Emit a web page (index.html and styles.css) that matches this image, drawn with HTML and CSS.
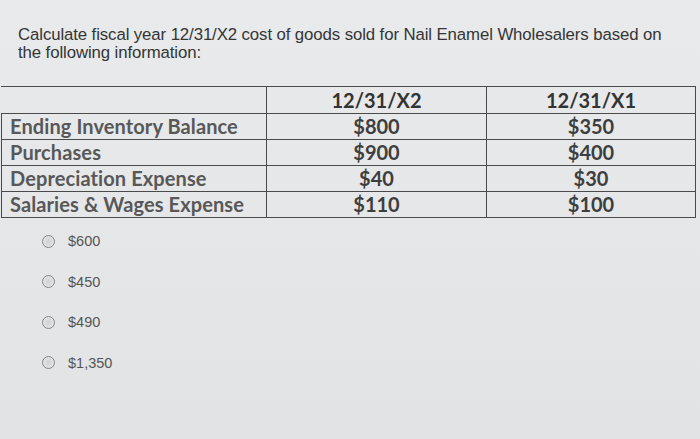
FILE: index.html
```html
<!DOCTYPE html>
<html>
<head>
<meta charset="utf-8">
<link rel="stylesheet" href="styles.css">
</head>
<body>
<div class="page">
  <p class="question">Calculate fiscal year 12/31/X2 cost of goods sold for Nail Enamel Wholesalers based on<br>the following information:</p>
  <table class="data">
    <tr class="head"><td class="label"></td><td>12/31/X2</td><td>12/31/X1</td></tr>
    <tr><td class="label">Ending Inventory Balance</td><td>$800</td><td>$350</td></tr>
    <tr><td class="label">Purchases</td><td>$900</td><td>$400</td></tr>
    <tr><td class="label">Depreciation Expense</td><td>$40</td><td>$30</td></tr>
    <tr><td class="label">Salaries &amp; Wages Expense</td><td>$110</td><td>$100</td></tr>
  </table>
  <ul class="options">
    <li><span class="radio"></span>$600</li>
    <li><span class="radio"></span>$450</li>
    <li><span class="radio"></span>$490</li>
    <li><span class="radio"></span>$1,350</li>
  </ul>
</div>
</body>
</html>
```
FILE: styles.css
```css
html, body {
  margin: 0;
  padding: 0;
}
body {
  width: 700px;
  height: 439px;
  overflow: hidden;
  background: linear-gradient(180deg, #e8eaeb 0%, #e4e6e8 60%, #e1e3e5 100%);
}
.page {
  padding-top: 26px;
}
.question {
  margin: 0 0 0 18px;
  font-family: "Liberation Sans", Arial, sans-serif;
  font-size: 16.8px;
  line-height: 17.5px;
  color: #353535;
  letter-spacing: -0.1px;
}
.data {
  margin-top: 25px;
  margin-left: 1px;
  width: 695px;
  border-collapse: collapse;
  font-family: Lato, "Open Sans", sans-serif;
  font-weight: 700;
  font-size: 20px;
  color: #3e3e3e;
}
.data td {
  border: 1.5px solid #4a4a4a;
  height: 25px;
  padding: 0;
  text-align: center;
  line-height: 25px;
}
.data td:nth-child(2) { width: 219px; }
.data td:nth-child(3) { width: 208px; }
.data td.label {
  text-align: left;
  padding-left: 8px;
  color: #585858;
  letter-spacing: 0.1px;
}
.data .head td {
  height: 26px;
  color: #333;
}
.data .head td.label {
  border-left-color: transparent;
}
.options {
  list-style: none;
  margin: 3px 0 0 0;
  padding: 0 0 0 42px;
  font-family: "Liberation Sans", Arial, sans-serif;
  font-size: 14.5px;
  color: #555;
}
.options li {
  display: flex;
  align-items: center;
  height: 40.5px;
}
.radio {
  width: 13px;
  height: 13px;
  border: 1.5px solid #858585;
  border-radius: 50%;
  background: radial-gradient(circle, #cfd1d3 0%, #e2e4e6 75%);
  margin-right: 13px;
  box-sizing: border-box;
}
```
